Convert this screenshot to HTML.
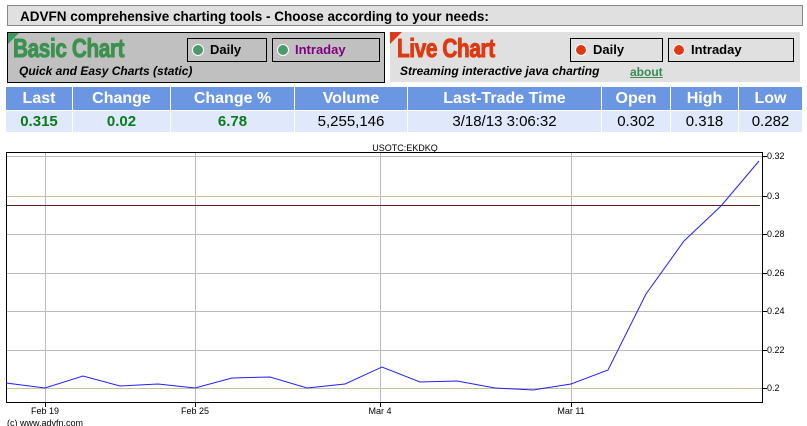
<!DOCTYPE html>
<html><head><style>
body{margin:0;width:807px;height:426px;background:#fff;font-family:"Liberation Sans",sans-serif;position:relative;overflow:hidden}
.a{position:absolute}
.hdr{left:7px;top:5px;height:21px;background:#e0e0e0;border:1px solid #888;font-weight:bold;font-size:13.5px;line-height:21px;padding-left:12px;box-sizing:border-box;width:796px}
.box{border:1px solid #000;box-sizing:border-box}
.btn{border:1px solid #000;height:24px;box-sizing:border-box;font-weight:bold;font-size:13px;line-height:22px}
.dot{display:inline-block;width:10px;height:10px;border-radius:50%;border:1.5px solid #fff;vertical-align:-2px;margin:0 6px 0 4px}
table{position:absolute;left:5px;top:86px;border-collapse:collapse;width:798px}
td{border:1px solid #fff;text-align:center;padding:0;font-size:15px}
tr.h td{background:#6b96e1;color:#fff;font-weight:bold;height:23px;font-size:16px}
tr.d td{background:#dfe9fb;height:21px}
.g{color:#0a7a1a;font-weight:bold}
.big{font-family:"Liberation Sans",sans-serif;font-weight:bold;font-size:26px;letter-spacing:-0.5px;transform:scaleX(0.8);transform-origin:0 0;line-height:28px;-webkit-text-stroke:1px currentColor}
</style></head><body>
<div class="a hdr">ADVFN comprehensive charting tools - Choose according to your needs:</div>
<div class="a box" style="left:7px;top:32px;width:378px;height:51px;background:#c0c0c0"></div>
<div class="a" style="left:8px;top:33px;width:0;height:0;border-top:11px solid #3a9a5a;border-right:11px solid transparent"></div>
<div class="a big" style="left:13px;top:34px;color:#3d9150">Basic Chart</div>
<div class="a" style="left:19px;top:64px;font-style:italic;font-weight:bold;font-size:12px">Quick and Easy Charts (static)</div>
<div class="a btn" style="left:187px;top:38px;width:80px"><span class="dot" style="background:#4a9a6a"></span>Daily</div>
<div class="a btn" style="left:272px;top:38px;width:108px;color:#800080"><span class="dot" style="background:#4a9a6a"></span>Intraday</div>
<div class="a" style="left:390px;top:32px;width:410px;height:50px;background:#e0e0e0"></div>
<div class="a" style="left:390px;top:32px;width:0;height:0;border-top:12px solid #dd3a1a;border-right:12px solid transparent"></div>
<div class="a big" style="left:397px;top:34px;color:#dd3a12">Live Chart</div>
<div class="a" style="left:400px;top:64px;font-style:italic;font-weight:bold;font-size:12px">Streaming interactive java charting</div>
<div class="a" style="left:630px;top:65px;font-weight:bold;font-size:12px;color:#3a8a5a;text-decoration:underline">about</div>
<div class="a btn" style="left:570px;top:38px;width:93px"><span class="dot" style="background:#dd3a12"></span>Daily</div>
<div class="a btn" style="left:668px;top:38px;width:126px"><span class="dot" style="background:#dd3a12"></span>Intraday</div>
<table>
<tr class="h"><td style="width:66px">Last</td><td style="width:97px">Change</td><td style="width:123px">Change %</td><td style="width:112px">Volume</td><td style="width:193px">Last-Trade Time</td><td style="width:68px">Open</td><td style="width:67px">High</td><td>Low</td></tr>
<tr class="d"><td class="g">0.315</td><td class="g">0.02</td><td class="g">6.78</td><td>5,255,146</td><td>3/18/13 3:06:32</td><td>0.302</td><td>0.318</td><td>0.282</td></tr>
</table>
<svg class="a" style="left:0;top:140px" width="807" height="286" font-family="Liberation Sans,sans-serif" font-size="9">
<text x="405" y="11" text-anchor="middle">USOTC:EKDKQ</text>
<g stroke="#bbb" stroke-width="1">
<line x1="6" x2="763" y1="16.5" y2="16.5"/><line x1="6" x2="763" y1="94.5" y2="94.5"/><line x1="6" x2="763" y1="133.5" y2="133.5"/><line x1="6" x2="763" y1="171.5" y2="171.5"/><line x1="6" x2="763" y1="210.5" y2="210.5"/>
<line x1="45.5" x2="45.5" y1="12" y2="263"/><line x1="195.5" x2="195.5" y1="12" y2="263"/><line x1="380.5" x2="380.5" y1="12" y2="263"/><line x1="571.5" x2="571.5" y1="12" y2="263"/>
</g>
<line x1="6" x2="763" y1="56.5" y2="56.5" stroke="#c8c0a0"/><line x1="6" x2="763" y1="248.5" y2="248.5" stroke="#c8c0a0"/>
<line x1="6" x2="760" y1="65.5" y2="65.5" stroke="#602020"/>
<rect x="6.5" y="12.5" width="756" height="250" fill="none" stroke="#000"/>
<polyline fill="none" stroke="#2020ff" stroke-width="1" points="6,243 45,248 83,236 120,246 158,244 195,248 232,238 270,237 307,248 345,244 382,227 420,242 457,241 495,248 533,250 571,244 608,230 646,154 684,101 721,66 759,21"/>
<g><text x="767" y="19">0.32</text><text x="767" y="59">0.3</text><text x="767" y="97">0.28</text><text x="767" y="136">0.26</text><text x="767" y="174">0.24</text><text x="767" y="213">0.22</text><text x="767" y="251">0.2</text></g>
<g stroke="#000"><line x1="763" x2="767" y1="16.5" y2="16.5"/><line x1="763" x2="767" y1="56.5" y2="56.5"/><line x1="763" x2="767" y1="94.5" y2="94.5"/><line x1="763" x2="767" y1="133.5" y2="133.5"/><line x1="763" x2="767" y1="171.5" y2="171.5"/><line x1="763" x2="767" y1="210.5" y2="210.5"/><line x1="763" x2="767" y1="248.5" y2="248.5"/>
<line x1="45.5" x2="45.5" y1="263" y2="267"/><line x1="195.5" x2="195.5" y1="263" y2="267"/><line x1="380.5" x2="380.5" y1="263" y2="267"/><line x1="571.5" x2="571.5" y1="263" y2="267"/></g>
<g text-anchor="middle"><text x="45" y="274">Feb 19</text><text x="195" y="274">Feb 25</text><text x="380" y="274">Mar 4</text><text x="571" y="274">Mar 11</text></g>
<text x="7" y="286">(c) www.advfn.com</text>
</svg>
</body></html>
